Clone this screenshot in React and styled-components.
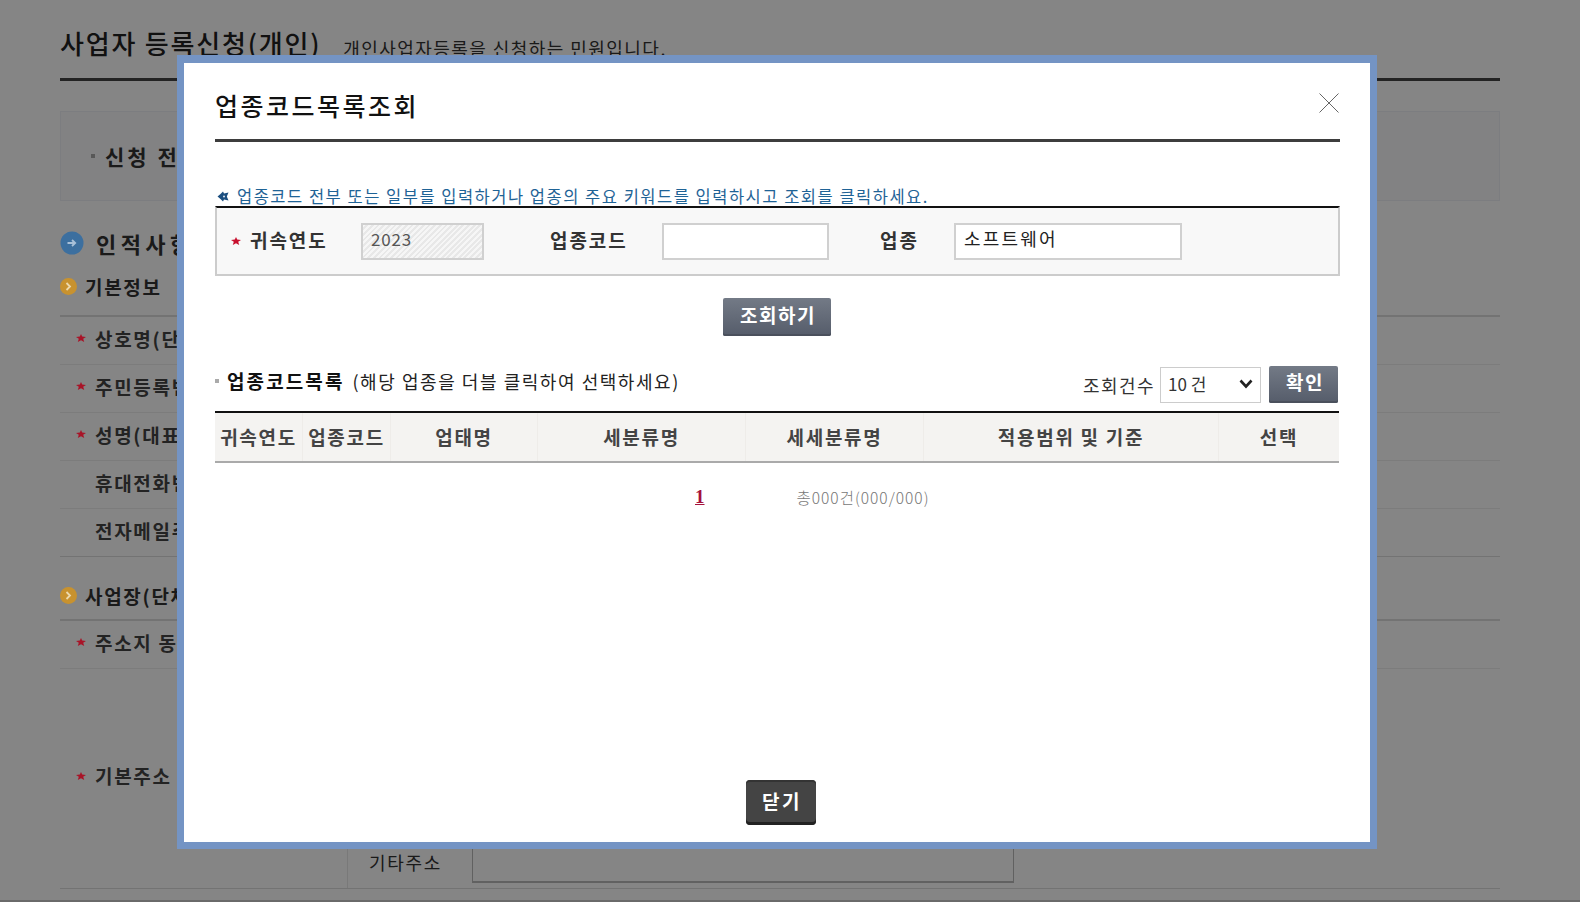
import React from "react";
import styled, { createGlobalStyle } from "styled-components";

const FONT = `"Noto Sans CJK KR", "Noto Sans", "Liberation Sans", sans-serif`;

const Global = createGlobalStyle`
  html, body { margin: 0; padding: 0; background: #fff; }
  body { font-family: ${FONT}; color: #333; height: 902px; overflow: hidden; }
`;

const Page = styled.div`
  position: relative;
  width: 1580px;
  height: 902px;
  overflow: hidden;
  padding: 0 80px 0 60px;
  box-sizing: border-box;
`;
const PageHead = styled.div`
  height: 81px;
  box-sizing: border-box;
  border-bottom: 3px solid #444;
  display: flex;
  align-items: flex-start;
  padding-top: 25px;
  gap: 22px;
`;
const PageTitle = styled.h1`
  margin: 0;
  font-size: 26px;
  line-height: 36px;
  font-weight: 500;
  color: #222;
  letter-spacing: 1.8px;
`;
const PageSub = styled.span`
  font-size: 18px;
  line-height: 46px;
  color: #333;
  letter-spacing: 1.45px;
`;
const InfoPanel = styled.div`
  margin-top: 30px;
  height: 90px;
  box-sizing: border-box;
  border: 1px solid #eef0f5;
  background: #f9fafc;
  padding-left: 30px;
  display: flex;
  align-items: center;
  gap: 10px;
  font-size: 21px;
  font-weight: 700;
  color: #333;
  letter-spacing: 3px;
`;
const SmallBullet = styled.i`
  width: 4px;
  height: 4px;
  background: #aaa;
  display: block;
  flex: none;
`;
const MainSection = styled.div`
  margin-top: 28px;
  height: 28px;
  display: flex;
  align-items: center;
  gap: 12px;
  font-size: 22px;
  font-weight: 700;
  color: #333;
  letter-spacing: 4.4px;
`;
const SubSection = styled.div`
  margin-top: ${(p) => p.$top}px;
  height: 24px;
  display: flex;
  align-items: center;
  gap: 8px;
  font-size: 19px;
  font-weight: 700;
  color: #333;
  letter-spacing: 1.7px;
`;
const RowGroup = styled.div`
  margin-top: ${(p) => p.$top}px;
  border-top: 2px solid #ddd;
`;
const FormRow = styled.div`
  height: 48px;
  box-sizing: border-box;
  border-bottom: 1px solid ${(p) => (p.$strong ? "#ddd" : "#eee")};
  display: flex;
  align-items: center;
  padding: 0 0 5px 16px;
  gap: 9px;
  font-size: 19px;
  font-weight: 600;
  color: #444;
  letter-spacing: 1.7px;
`;
const StarSlot = styled.span`
  width: 10px;
  flex: none;
  display: flex;
  position: relative;
  z-index: 1;
`;
const AddressBlock = styled.div`
  height: 220px;
  box-sizing: border-box;
  border-bottom: 1px solid #ddd;
  display: flex;
`;
const AddressLabel = styled.div`
  width: 287px;
  flex: none;
  display: flex;
  align-items: center;
  padding: 0 0 6px 16px;
  box-sizing: border-box;
  gap: 9px;
  font-size: 19px;
  font-weight: 600;
  color: #444;
  letter-spacing: 1.7px;
`;
const AddressFields = styled.div`
  flex: 1;
  display: flex;
  flex-direction: column;
  justify-content: flex-end;
  border-left: 1px solid #e8e8e8;
`;
const AddressRow = styled.div`
  height: 50px;
  padding: 0 0 5px 21px;
  box-sizing: border-box;
  display: flex;
  align-items: flex-end;
  gap: 30px;
  font-size: 18px;
  color: #333;
  line-height: 41px;
  letter-spacing: 1.7px;
`;
const AddressInput = styled.div`
  width: 542px;
  height: 40px;
  box-sizing: border-box;
  border: 1px solid #bbb;
  border-bottom-width: 2px;
  background: #fff;
`;

const IconOver = styled.span`
  position: relative;
  z-index: 1;
  display: flex;
  flex: none;
`;
const Dim = styled.div`
  position: absolute;
  inset: 0;
  background: rgba(0, 0, 0, 0.48);
  border-bottom: 2px solid rgba(0, 0, 0, 0.2);
`;
const Modal = styled.div`
  position: absolute;
  z-index: 2;
  left: 177px;
  top: 55px;
  width: 1200px;
  height: 794px;
  box-sizing: border-box;
  border: 7px solid #7494c4;
  border-top-width: 8px;
  background: #fff;
  padding: 0 30px 0 31px;
  display: flex;
  flex-direction: column;
`;
const ModalHead = styled.div`
  height: 79px;
  box-sizing: border-box;
  border-bottom: 3px solid #3d3d3d;
  display: flex;
  justify-content: space-between;
  align-items: flex-start;
`;
const ModalTitle = styled.h2`
  margin: 23px 0 0;
  font-size: 25px;
  line-height: 38px;
  font-weight: 500;
  color: #111;
  letter-spacing: 2.5px;
`;
const CloseBtn = styled.button`
  margin: 30px 1px 0 0;
  padding: 0;
  border: 0;
  background: none;
  width: 20px;
  height: 20px;
  display: block;
`;
const Notice = styled.p`
  margin: 44px 0 0;
  height: 20px;
  display: flex;
  align-items: center;
  gap: 8px;
  padding-left: 2px;
  font-size: 16.5px;
  line-height: 20px;
  color: #1f6396;
  letter-spacing: 1.5px;
`;
const SearchBox = styled.div`
  height: 70px;
  box-sizing: border-box;
  border: 2px solid #ccc;
  border-top-color: #111;
  background: #f8f8f8;
  display: flex;
  align-items: center;
  padding-left: 14px;
`;
const FieldLabel = styled.label`
  width: ${(p) => p.$w}px;
  margin-left: ${(p) => p.$ml || 0}px;
  margin-bottom: 4px;
  flex: none;
  font-size: 19px;
  font-weight: 700;
  color: #333;
  letter-spacing: 1.95px;
`;
const StarCell = styled.span`
  width: 19px;
  flex: none;
  display: flex;
`;
const Field = styled.div`
  width: ${(p) => p.$w}px;
  height: 37px;
  flex: none;
  box-sizing: border-box;
  border: 2px solid #d0d0d0;
  background: ${(p) =>
    p.$locked
      ? "repeating-linear-gradient(135deg, #f6f6f6 0 2px, #e8e8e8 2px 4px)"
      : "#fff"};
  padding-left: 8px;
  font-size: ${(p) => (p.$locked ? 17 : 18)}px;
  line-height: 27px;
  color: ${(p) => (p.$locked ? "#555" : "#222")};
  letter-spacing: ${(p) => (p.$locked ? 0.8 : 2.2)}px;
`;
const ButtonRow = styled.div`
  margin-top: 22px;
  padding-right: 2px;
  display: flex;
  justify-content: center;
`;
const SlateButton = styled.button`
  width: ${(p) => p.$w}px;
  height: ${(p) => p.$h}px;
  padding: 0 0 6px 3px;
  border: 0;
  border-radius: 2px;
  background: linear-gradient(#737a86, #555c6a);
  box-shadow: inset 0 -2px 0 #4a505c;
  color: #fff;
  font-family: ${FONT};
  font-size: 19px;
  font-weight: 700;
  letter-spacing: 1.5px;
`;
const ListBar = styled.div`
  margin-top: 30px;
  height: 37px;
  display: flex;
  justify-content: space-between;
  align-items: center;
  padding-right: 2px;
`;
const ListHeading = styled.div`
  display: flex;
  align-items: center;
  margin-top: -8px;
`;
const ListTitle = styled.strong`
  font-size: 19px;
  font-weight: 700;
  color: #111;
  margin: 0 8px 0 8px;
  letter-spacing: 2.1px;
`;
const ListHint = styled.span`
  font-size: 18px;
  color: #222;
  letter-spacing: 1.55px;
`;
const ListTools = styled.div`
  display: flex;
  align-items: center;
`;
const ToolLabel = styled.span`
  font-size: 18px;
  color: #333;
  margin-right: 5px;
  margin-top: 1px;
  letter-spacing: 1.45px;
`;
const SelectWrap = styled.span`
  position: relative;
  display: block;
  width: 101px;
  height: 36px;
  margin-right: 8px;
`;
const CountSelect = styled.select`
  appearance: none;
  width: 100%;
  height: 100%;
  box-sizing: border-box;
  border: 1px solid #ccc;
  border-radius: 0;
  background: #fff;
  padding: 0 0 2px 7px;
  font-family: ${FONT};
  font-size: 17px;
  color: #333;
`;
const Chevron = styled.svg`
  position: absolute;
  right: 8px;
  top: 12px;
  pointer-events: none;
`;
const Table = styled.table`
  margin-top: 8px;
  width: calc(100% - 1px);
  table-layout: fixed;
  border-collapse: separate;
  border-spacing: 0;
  border-top: 2px solid #111;
  border-bottom: 2px solid #aaa;
  background: #f4f3f1;
`;
const Th = styled.th`
  height: 46px;
  padding: 0 0 2px;
  border-right: 1px solid #eeece9;
  font-size: 19px;
  font-weight: 700;
  color: #444;
  letter-spacing: 1.7px;
  &:last-child { border-right: 0; }
`;
const Pager = styled.div`
  margin-top: 23px;
  padding-left: 480px;
  height: 22px;
  display: flex;
  align-items: center;
  gap: 92px;
`;
const PageNo = styled.a`
  font-family: "Liberation Serif", serif;
  font-size: 19px;
  font-weight: 700;
  color: #a5103c;
  text-decoration: underline;
`;
const Total = styled.span`
  font-size: 15.5px;
  color: #777;
  font-weight: 300;
  letter-spacing: 1px;
`;
const ModalFoot = styled.div`
  margin-top: auto;
  padding: 0 0 17px 6px;
  display: flex;
  justify-content: center;
`;
const DarkButton = styled.button`
  width: 70px;
  height: 45px;
  padding: 0 0 5px 3px;
  border: 0;
  border-radius: 4px;
  background: #444;
  box-shadow: inset 0 -3px 0 #222, inset 0 2px 0 #333;
  color: #fff;
  font-family: ${FONT};
  font-size: 19px;
  font-weight: 700;
  letter-spacing: 2.5px;
`;

const Star = ({ color = "#c8102e" }) => (
  <svg width="10" height="8" viewBox="0 0 10 8" aria-hidden="true">
    <path d="M5 0 6.2 2.6 10 3 7.2 4.8 8.2 8 5 6.2 1.8 8 2.8 4.8 0 3 3.8 2.6Z" fill={color} />
  </svg>
);
const BlueCircle = () => (
  <svg width="24" height="24" viewBox="0 0 24 24" aria-hidden="true">
    <circle cx="12" cy="12" r="11.5" fill="#3c6f9f" />
    <path d="M7.5 12H15M12 9l3.2 3-3.2 3" fill="none" stroke="#a8c0d8" strokeWidth="1.8" />
  </svg>
);
const OrangeCircle = () => (
  <svg width="17" height="17" viewBox="0 0 17 17" aria-hidden="true">
    <circle cx="8.5" cy="8.5" r="8.5" fill="#c8922f" />
    <path d="M6.5 5l3.5 3.5L6.5 12" fill="none" stroke="#ecd9ae" strokeWidth="1.8" />
  </svg>
);
const NoticeIcon = () => (
  <svg width="12" height="11" viewBox="0 0 12 11" aria-hidden="true">
    <path d="M6 0.5 7 2.5 11.5 1.5 9.8 5.5 11.5 9.5 7 8.5 6 10.5 3.5 8 0.5 5.5 3.5 3Z" fill="#1b4f80" />
    <circle cx="7" cy="5.5" r="1" fill="#dfe8f2" />
  </svg>
);
const CloseIcon = () => (
  <svg width="20" height="20" viewBox="0 0 20 20" aria-hidden="true">
    <path d="M0.5 0.5 19.5 19.5M19.5 0.5 0.5 19.5" stroke="#666" strokeWidth="1" fill="none" />
  </svg>
);

const topRows = [
  { t: "상호명(단체명)", s: true },
  { t: "주민등록번호", s: true },
  { t: "성명(대표자)", s: true },
  { t: "휴대전화번호", s: false },
  { t: "전자메일주소", s: false },
];
const columns = [
  ["귀속연도", 88],
  ["업종코드", 88],
  ["업태명", 147],
  ["세분류명", 208],
  ["세세분류명", 178],
  ["적용범위 및 기준", 295],
  ["선택", 120],
];

export default function App() {
  return (
    <>
      <Global />
      <Page>
        <PageHead>
          <PageTitle>사업자 등록신청(개인)</PageTitle>
          <PageSub>개인사업자등록을 신청하는 민원입니다.</PageSub>
        </PageHead>
        <InfoPanel>
          <SmallBullet />
          신청 전 확인사항
        </InfoPanel>
        <MainSection>
          <IconOver>
            <BlueCircle />
          </IconOver>
          인적사항
        </MainSection>
        <SubSection $top={17}>
          <IconOver>
            <OrangeCircle />
          </IconOver>
          기본정보
        </SubSection>
        <RowGroup $top={17}>
          {topRows.map((r, i) => (
            <FormRow key={r.t} $strong={i === 4}>
              <StarSlot>{r.s && <Star color="#a81428" />}</StarSlot>
              {r.t}
            </FormRow>
          ))}
        </RowGroup>
        <SubSection $top={26}>
          <IconOver>
            <OrangeCircle />
          </IconOver>
          사업장(단체)
        </SubSection>
        <RowGroup $top={12}>
          <FormRow>
            <StarSlot>
              <Star color="#a81428" />
            </StarSlot>
            주소지 동
          </FormRow>
          <AddressBlock>
            <AddressLabel>
              <StarSlot>
                <Star color="#a81428" />
              </StarSlot>
              기본주소
            </AddressLabel>
            <AddressFields>
              <AddressRow>
                기타주소
                <AddressInput />
              </AddressRow>
            </AddressFields>
          </AddressBlock>
        </RowGroup>

        <Dim />
        <Modal>
          <ModalHead>
            <ModalTitle>업종코드목록조회</ModalTitle>
            <CloseBtn aria-label="닫기">
              <CloseIcon />
            </CloseBtn>
          </ModalHead>
          <Notice>
            <NoticeIcon />
            업종코드 전부 또는 일부를 입력하거나 업종의 주요 키워드를 입력하시고 조회를 클릭하세요.
          </Notice>
          <SearchBox>
            <StarCell>
              <Star />
            </StarCell>
            <FieldLabel $w={111}>귀속연도</FieldLabel>
            <Field $w={123} $locked>2023</Field>
            <FieldLabel $w={112} $ml={66}>업종코드</FieldLabel>
            <Field $w={167} />
            <FieldLabel $w={74} $ml={51}>업종</FieldLabel>
            <Field $w={228}>소프트웨어</Field>
          </SearchBox>
          <ButtonRow>
            <SlateButton $w={108} $h={38}>조회하기</SlateButton>
          </ButtonRow>
          <ListBar>
            <ListHeading>
              <SmallBullet />
              <ListTitle>업종코드목록</ListTitle>
              <ListHint>(해당 업종을 더블 클릭하여 선택하세요)</ListHint>
            </ListHeading>
            <ListTools>
              <ToolLabel>조회건수</ToolLabel>
              <SelectWrap>
                <CountSelect defaultValue="10">
                  <option value="10">10 건</option>
                  <option value="20">20 건</option>
                </CountSelect>
                <Chevron width="14" height="10" viewBox="0 0 14 10" aria-hidden="true">
                  <path d="M1.5 1.5 7 7.5 12.5 1.5" fill="none" stroke="#222" strokeWidth="2.6" />
                </Chevron>
              </SelectWrap>
              <SlateButton $w={69} $h={37}>확인</SlateButton>
            </ListTools>
          </ListBar>
          <Table>
            <colgroup>
              {columns.map(([t, w]) => (
                <col key={t} style={{ width: w }} />
              ))}
            </colgroup>
            <thead>
              <tr>
                {columns.map(([t]) => (
                  <Th key={t}>{t}</Th>
                ))}
              </tr>
            </thead>
          </Table>
          <Pager>
            <PageNo>1</PageNo>
            <Total>총000건(000/000)</Total>
          </Pager>
          <ModalFoot>
            <DarkButton>닫기</DarkButton>
          </ModalFoot>
        </Modal>
      </Page>
    </>
  );
}
